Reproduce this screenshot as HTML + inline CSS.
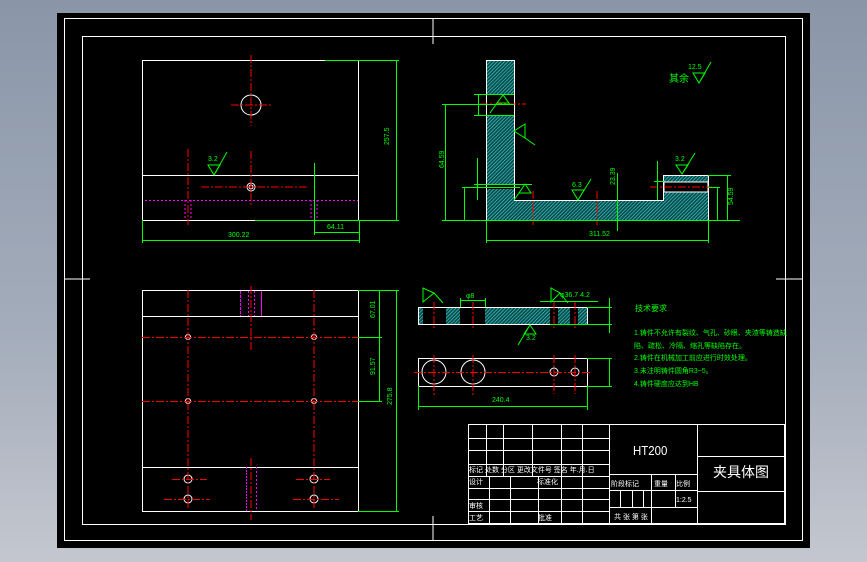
<!DOCTYPE html>
<html><head><meta charset="utf-8"><style>
html,body{margin:0;padding:0;width:867px;height:562px;overflow:hidden;background:linear-gradient(#8a96a8,#a4adbb 60%,#c4c7cf);}
svg{position:absolute;left:0;top:0}
text{font-family:"Liberation Sans","Noto Sans CJK SC",sans-serif;fill:#00ff00;font-size:7px}
</style></head><body>
<svg width="867" height="562" viewBox="0 0 867 562">
<defs>
<pattern id="h" width="2.5" height="2.5" patternUnits="userSpaceOnUse" patternTransform="rotate(45)">
<rect width="2.5" height="2.5" fill="#0a4a4a"/><line x1="0" y1="0" x2="0" y2="2.5" stroke="#44dddd" stroke-width="1.2"/>
</pattern>
</defs>
<rect x="57" y="13" width="753" height="535" fill="#000"/>
<g fill="none" stroke="#fff" stroke-width="1">
<rect x="64.5" y="18.5" width="738" height="522"/>
<rect x="82.5" y="36.5" width="703" height="488"/>
<line x1="433" y1="18" x2="433" y2="44"/><line x1="433" y1="516" x2="433" y2="540"/>
<line x1="64" y1="279" x2="90" y2="279"/><line x1="776" y1="279" x2="802" y2="279"/>
</g>
<!-- top-left view -->
<g fill="none" stroke="#fff">
<rect x="142.5" y="60.5" width="216" height="160"/>
<line x1="142" y1="175.5" x2="359" y2="175.5"/>
<circle cx="251" cy="105" r="10"/>
<circle cx="251" cy="187" r="4"/><circle cx="251" cy="187" r="2"/>
</g>
<g stroke="#f00" stroke-dasharray="8,2,2,2" fill="none">
<line x1="251" y1="55" x2="251" y2="126"/><line x1="231" y1="105" x2="271" y2="105"/>
<line x1="251" y1="151" x2="251" y2="206"/><line x1="201" y1="187" x2="307" y2="187"/>
<line x1="188" y1="149" x2="188" y2="225"/>
</g>
<g stroke="#f0f" stroke-dasharray="2,2" fill="none">
<line x1="145" y1="200.5" x2="358" y2="200.5"/>
<line x1="185" y1="200" x2="185" y2="220"/><line x1="191" y1="200" x2="191" y2="220"/>
<line x1="311" y1="200" x2="311" y2="220"/><line x1="317" y1="200" x2="317" y2="220"/>
</g>
<g stroke="#0f0" fill="none">
<line x1="325" y1="60.5" x2="399" y2="60.5"/><line x1="396.5" y1="60" x2="396.5" y2="220"/>
<line x1="255" y1="220.5" x2="399" y2="220.5"/>
<line x1="142.5" y1="220" x2="142.5" y2="243"/><line x1="359.5" y1="220" x2="359.5" y2="243"/>
<line x1="142" y1="240.5" x2="359" y2="240.5"/>
<line x1="314.5" y1="163" x2="314.5" y2="235"/><line x1="314" y1="232.5" x2="359" y2="232.5"/>
<path d="M208 165 L220 165 L214 175 Z M214 175 L227 152"/>
</g>
<text x="228" y="237">300.22</text><text x="327" y="229">64.11</text>
<text x="208" y="161">3.2</text>
<text x="389" y="145" transform="rotate(-90 389 145)">257.5</text>
<!-- bottom-left view -->
<g fill="none" stroke="#fff">
<rect x="142.5" y="290.5" width="216" height="221"/>
<line x1="142" y1="316.5" x2="358" y2="316.5"/><line x1="142" y1="467.5" x2="358" y2="467.5"/>
<circle cx="188" cy="337" r="2.5"/><circle cx="314" cy="337" r="2.5"/>
<circle cx="188" cy="401" r="2.5"/><circle cx="314" cy="401" r="2.5"/>
<circle cx="188" cy="479" r="4"/><circle cx="314" cy="479" r="4"/>
<circle cx="188" cy="499" r="4"/><circle cx="314" cy="499" r="4"/>
</g>
<g stroke="#f00" stroke-dasharray="8,2,2,2" fill="none">
<line x1="188" y1="290" x2="188" y2="508"/><line x1="314" y1="290" x2="314" y2="508"/>
<line x1="142" y1="337.5" x2="358" y2="337.5"/><line x1="142" y1="401.5" x2="358" y2="401.5"/>
<line x1="251" y1="286" x2="251" y2="350"/><line x1="251" y1="458" x2="251" y2="520"/>
<line x1="172" y1="479.5" x2="207" y2="479.5"/><line x1="296" y1="479.5" x2="330" y2="479.5"/>
<line x1="164" y1="499.5" x2="210" y2="499.5"/><line x1="293" y1="499.5" x2="339" y2="499.5"/>
</g>
<g stroke="#f0f" fill="none">
<line x1="240.5" y1="291" x2="240.5" y2="316" stroke-dasharray="3,1"/><line x1="248.5" y1="291" x2="248.5" y2="316" stroke-dasharray="2,2"/>
<line x1="254.5" y1="291" x2="254.5" y2="316" stroke-dasharray="2,2"/><line x1="261.5" y1="291" x2="261.5" y2="316"/>
<line x1="246.5" y1="467" x2="246.5" y2="511" stroke-dasharray="2,1"/><line x1="256.5" y1="467" x2="256.5" y2="511" stroke-dasharray="2,2"/>
</g>
<g stroke="#0f0" fill="none">
<line x1="358" y1="290.5" x2="399" y2="290.5"/><line x1="358" y1="337.5" x2="382" y2="337.5"/>
<line x1="358" y1="401.5" x2="382" y2="401.5"/><line x1="358" y1="511.5" x2="399" y2="511.5"/>
<line x1="379.5" y1="290" x2="379.5" y2="401"/><line x1="396.5" y1="290" x2="396.5" y2="511"/>
</g>
<text x="375" y="318" transform="rotate(-90 375 318)">67.01</text>
<text x="375" y="375" transform="rotate(-90 375 375)">91.57</text>
<text x="392" y="405" transform="rotate(-90 392 405)">275.8</text>
<!-- section view -->
<g stroke="#fff" fill="url(#h)">
<path d="M486.5 60.5 H514.5 V200.5 H663.5 V175.5 H708.5 V220.5 H486.5 Z"/>
</g>
<rect x="487" y="95" width="27" height="20" fill="#000"/>
<rect x="487" y="185" width="27" height="4" fill="#000"/>
<rect x="664" y="182" width="44" height="10" fill="#000" stroke="#fff"/>
<g stroke="#f00" stroke-dasharray="8,2,2,2" fill="none">
<line x1="480" y1="104" x2="526" y2="104"/><line x1="650" y1="187" x2="712" y2="187"/>
<line x1="533" y1="191" x2="533" y2="225"/><line x1="597" y1="191" x2="597" y2="225"/>
</g>
<g stroke="#0f0" fill="none">
<line x1="442" y1="104.5" x2="514" y2="104.5"/><line x1="445.5" y1="104" x2="445.5" y2="220"/>
<line x1="442" y1="220.5" x2="740" y2="220.5"/><line x1="462" y1="187.5" x2="520" y2="187.5"/>
<line x1="464.5" y1="187" x2="464.5" y2="220"/>
<line x1="474" y1="94.5" x2="514" y2="94.5"/><line x1="474" y1="115.5" x2="514" y2="115.5"/>
<line x1="478.5" y1="94" x2="478.5" y2="116"/><line x1="477.5" y1="158" x2="477.5" y2="200"/>
<line x1="474" y1="184.5" x2="532" y2="184.5"/>
<line x1="486.5" y1="220" x2="486.5" y2="243"/><line x1="708.5" y1="220" x2="708.5" y2="243"/>
<line x1="486" y1="240.5" x2="708" y2="240.5"/>
<line x1="708" y1="175.5" x2="731" y2="175.5"/><line x1="708" y1="187.5" x2="720" y2="187.5"/>
<line x1="727.5" y1="175" x2="727.5" y2="220"/><line x1="717.5" y1="187" x2="717.5" y2="220"/>
<line x1="617.5" y1="173" x2="617.5" y2="231"/><line x1="657.5" y1="161" x2="657.5" y2="200"/>
<line x1="654" y1="181.5" x2="664" y2="181.5"/>
<path d="M503 95 L497 103 L509 103 Z M497 103 L490 113"/>
<path d="M514 131 L525 124 L525 138 Z M525 138 L535 145"/>
<path d="M525 184 L519 193 L531 193 Z M519 193 L514 200"/>
<path d="M572 190 L584 190 L578 200 Z M578 200 L591 179"/>
<path d="M676 165 L688 165 L682 174 Z M682 174 L695 153"/>
<path d="M693 73 L705 73 L699 83 Z M699 83 L711 62"/>
</g>
<text x="589" y="236">311.52</text><text x="572" y="187">6.3</text><text x="675" y="161">3.2</text>
<text x="688" y="69">12.5</text><text x="669" y="82" style="font-size:10px">其余</text>
<text x="444" y="168" transform="rotate(-90 444 168)">64.59</text>
<text x="615" y="185" transform="rotate(-90 615 185)">23.39</text>
<text x="733" y="205" transform="rotate(-90 733 205)">54.59</text>
<!-- bottom mid views -->
<rect x="418.5" y="307.5" width="169" height="17" fill="none" stroke="#fff"/>
<g fill="url(#h)"><rect x="419" y="308" width="4" height="16"/><rect x="446" y="308" width="14" height="16"/><rect x="485" y="308" width="65" height="16"/><rect x="558" y="308" width="12" height="16"/><rect x="578" y="308" width="9" height="16"/></g>
<rect x="418.5" y="358.5" width="169" height="28" fill="none" stroke="#fff"/>
<g fill="none" stroke="#fff"><circle cx="434" cy="372" r="12"/><circle cx="473" cy="372" r="12"/><circle cx="554" cy="372" r="4"/><circle cx="575" cy="372" r="4"/></g>
<g stroke="#f00" stroke-dasharray="8,2,2,2" fill="none">
<line x1="414" y1="372.5" x2="590" y2="372.5"/>
<line x1="434" y1="355" x2="434" y2="397"/><line x1="473" y1="355" x2="473" y2="397"/>
<line x1="554" y1="355" x2="554" y2="394"/><line x1="575" y1="355" x2="575" y2="394"/>
<line x1="434" y1="302" x2="434" y2="328"/><line x1="473" y1="302" x2="473" y2="328"/>
<line x1="554" y1="302" x2="554" y2="328"/><line x1="575" y1="302" x2="575" y2="328"/>
</g>
<g stroke="#0f0" fill="none">
<line x1="418.5" y1="386" x2="418.5" y2="410"/><line x1="587.5" y1="386" x2="587.5" y2="410"/>
<line x1="418" y1="406.5" x2="588" y2="406.5"/>
<line x1="587" y1="358.5" x2="612" y2="358.5"/><line x1="587" y1="386.5" x2="612" y2="386.5"/>
<line x1="609.5" y1="358" x2="609.5" y2="387"/>
<line x1="587" y1="307.5" x2="612" y2="307.5"/><line x1="550" y1="324.5" x2="612" y2="324.5"/>
<line x1="609.5" y1="298" x2="609.5" y2="333"/>
<line x1="460" y1="300.5" x2="486" y2="300.5"/><line x1="460.5" y1="298" x2="460.5" y2="307"/><line x1="485.5" y1="298" x2="485.5" y2="307"/>
<line x1="540" y1="301.5" x2="598" y2="301.5"/>
<path d="M423 288 L423 302 L434 293 Z M434 293 L443 303"/>
<path d="M551 288 L551 302 L560 293 Z M560 293 L568 303"/>
<path d="M530 325 L524 334 L536 334 Z M530 325 L518 345"/>
</g>
<text x="492" y="402">240.4</text><text x="466" y="298">φ8</text><text x="560" y="297">φ36.7  4.2</text>
<text x="526" y="340">3.2</text>
<text x="635" y="311" style="font-size:8px">技术要求</text>
<g style="font-size:6.6px">
<text x="634" y="335">1.铸件不允许有裂纹、气孔、砂眼、夹渣等铸造缺</text>
<text x="634" y="348">陷、疏松、冷隔、缩孔等缺陷存在。</text>
<text x="634" y="360">2.铸件在机械加工前应进行时效处理。</text>
<text x="634" y="373">3.未注明铸件圆角R3~5。</text>
<text x="634" y="386">4.铸件硬度应达到HB</text>
</g>
<!-- title block -->
<g fill="none" stroke="#fff">
<rect x="468.5" y="424.5" width="316" height="99"/>
<line x1="468" y1="438.5" x2="609" y2="438.5"/><line x1="468" y1="450.5" x2="609" y2="450.5"/>
<line x1="468" y1="464.5" x2="609" y2="464.5"/><line x1="468" y1="476.5" x2="609" y2="476.5"/>
<line x1="468" y1="488.5" x2="609" y2="488.5"/><line x1="468" y1="499.5" x2="609" y2="499.5"/>
<line x1="468" y1="511.5" x2="609" y2="511.5"/>
<line x1="486.5" y1="424" x2="486.5" y2="476"/><line x1="503.5" y1="424" x2="503.5" y2="476"/>
<line x1="532.5" y1="424" x2="532.5" y2="476"/><line x1="561.5" y1="424" x2="561.5" y2="523"/>
<line x1="582.5" y1="424" x2="582.5" y2="523"/><line x1="609.5" y1="424" x2="609.5" y2="523"/>
<line x1="489.5" y1="476" x2="489.5" y2="523"/><line x1="510.5" y1="476" x2="510.5" y2="523"/>
<line x1="538.5" y1="476" x2="538.5" y2="523"/>
<line x1="697.5" y1="424" x2="697.5" y2="523"/>
<line x1="609" y1="474.5" x2="697" y2="474.5"/><line x1="609" y1="507.5" x2="697" y2="507.5"/>
<line x1="651.5" y1="474" x2="651.5" y2="523"/><line x1="675.5" y1="474" x2="675.5" y2="507"/>
<line x1="620.5" y1="490" x2="620.5" y2="507"/><line x1="632.5" y1="490" x2="632.5" y2="507"/><line x1="643.5" y1="490" x2="643.5" y2="507"/>
<line x1="609" y1="490.5" x2="697" y2="490.5"/>
<line x1="697" y1="456.5" x2="784" y2="456.5"/><line x1="697" y1="491.5" x2="784" y2="491.5"/>
</g>
<g>
<text x="633" y="455" style="fill:#fff;font-size:13px" transform="translate(633 0) scale(0.88 1) translate(-633 0)">HT200</text>
<text x="713" y="477" style="fill:#fff;font-size:14px">夹具体图</text>
<text x="469" y="472" style="fill:#fff;font-size:7px">标记 处数  分区  更改文件号 签名 年.月.日</text>
<text x="469" y="484" style="fill:#fff;font-size:7px">设计</text><text x="537" y="484" style="fill:#fff;font-size:7px">标准化</text>
<text x="469" y="508" style="fill:#fff;font-size:7px">审核</text>
<text x="469" y="520" style="fill:#fff;font-size:7px">工艺</text><text x="538" y="520" style="fill:#fff;font-size:7px">批准</text>
<text x="611" y="486" style="fill:#fff;font-size:7px">阶段标记</text><text x="654" y="486" style="fill:#fff;font-size:7px">重量</text><text x="676" y="486" style="fill:#fff;font-size:7px">比例</text>
<text x="676" y="502" style="fill:#fff;font-size:7px">1:2.5</text>
<text x="614" y="519" style="fill:#fff;font-size:7px">共    张  第    张</text>
</g>
</svg>
</body></html>
